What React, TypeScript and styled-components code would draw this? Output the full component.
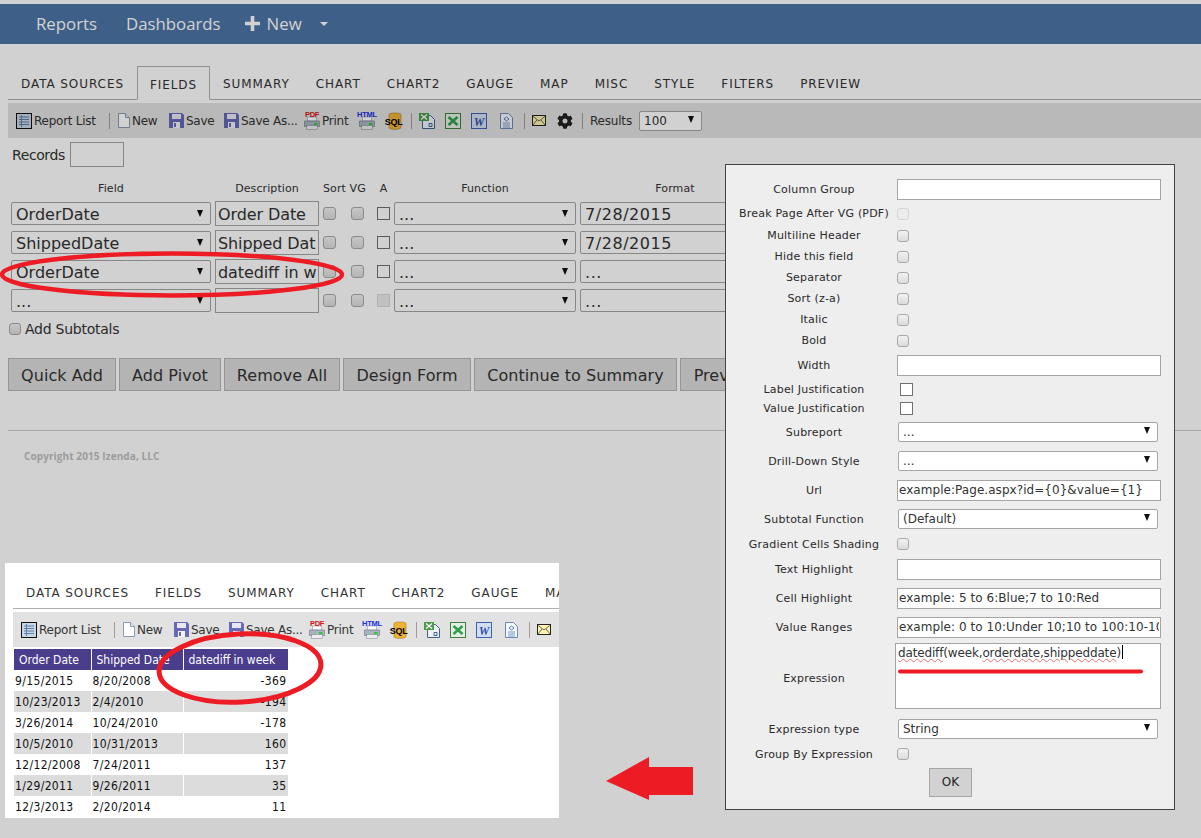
import React from 'react';
import styled, { createGlobalStyle } from 'styled-components';
import { FaCog } from 'react-icons/fa';

const GlobalStyle = createGlobalStyle`
  html, body {
    margin: 0;
    padding: 0;
    background: #ffffff;
  }
  * {
    box-sizing: border-box;
  }
`;

const Page = styled.div`
  position: relative;
  width: 1201px;
  height: 838px;
  overflow: hidden;
  background: #ffffff;
  color: #333333;
  font-family: "DejaVu Sans", Verdana, sans-serif;
  padding-top: 4px;
`;

const Nav = styled.div`
  height: 40px;
  display: flex;
  align-items: center;
  padding: 0 0 2px 36px;
  background: #4b75a6;
  color: #ffffff;
  font-family: "Open Sans", sans-serif;
  font-size: 16.8px;
`;

const NavItem = styled.span<{ $gap: number }>`
  margin-right: ${(p) => p.$gap}px;
  display: flex;
  align-items: center;
  gap: 6px;
`;

const Caret = styled.span`
  width: 0;
  height: 0;
  margin-top: 2px;
  border-left: 4px solid transparent;
  border-right: 4px solid transparent;
  border-top: 4px solid #ffffff;
`;

const Tabs = styled.div<{ $inset?: boolean }>`
  display: flex;
  align-items: flex-end;
  height: ${(p) => (p.$inset ? 29 : 34)}px;
  margin: ${(p) => (p.$inset ? '0 0 0 8px' : '22px 0 0 8px')};
  border-bottom: 1px solid #b0b0b0;
`;

const Tab = styled.div<{ $active?: boolean }>`
  flex: none;
  height: ${(p) => (p.$active ? 34 : 33)}px;
  padding: ${(p) => (p.$active ? '11px 12px 0' : '10px 12px 0')};
  margin-bottom: ${(p) => (p.$active ? -1 : 0)}px;
  font-size: 12px;
  letter-spacing: 0.92px;
  color: #333333;
  white-space: nowrap;
  background: #ffffff;
  border: 1px solid ${(p) => (p.$active ? '#b0b0b0' : 'transparent')};
  border-bottom-color: ${(p) => (p.$active ? '#ffffff' : 'transparent')};
`;

const Toolbar = styled.div`
  display: flex;
  align-items: center;
  height: 35px;
  margin: 3px 0 0 8px;
  padding-left: 8px;
  background: #e2e2e2;
  font-size: 12px;
  color: #333333;
  white-space: nowrap;
  overflow: hidden;
`;

const ToolItem = styled.span<{ $w: number }>`
  flex: none;
  display: flex;
  align-items: center;
  gap: 2px;
  width: ${(p) => p.$w}px;
  letter-spacing: -0.25px;
`;

const ToolSep = styled.span<{ $w: number }>`
  flex: none;
  width: ${(p) => p.$w}px;
  height: 16px;
  display: flex;
  justify-content: center;
  &::before {
    content: '';
    width: 1px;
    height: 16px;
    background: #a89a90;
  }
`;

const ResultsLabel = styled.span`
  flex: none;
  width: 49px;
  margin-left: 7px;
  letter-spacing: -0.2px;
`;

const Box = styled.div<{ $w: number; $h: number; $size: number; $track?: number }>`
  flex: none;
  display: flex;
  align-items: center;
  justify-content: space-between;
  width: ${(p) => p.$w}px;
  height: ${(p) => p.$h}px;
  padding: ${(p) => (p.$size > 14 ? '2px 7px 0 4px' : '0 7px 0 4px')};
  background: #ffffff;
  border: 1px solid #a5a5a5;
  border-radius: 2px;
  font-size: ${(p) => p.$size}px;
  letter-spacing: ${(p) => p.$track ?? 0}px;
  color: #333333;
  white-space: nowrap;
  overflow: hidden;
`;

const DownArrow = styled.span`
  flex: none;
  width: 0;
  height: 0;
  margin-bottom: 3px;
  border-left: 3.5px solid transparent;
  border-right: 3.5px solid transparent;
  border-top: 7px solid #111111;
`;

const RecordsRow = styled.div`
  display: flex;
  align-items: center;
  gap: 5px;
  height: 25px;
  margin: 4px 0 0 12px;
  font-size: 14px;
  letter-spacing: -0.4px;
`;

const RecordsBox = styled.div`
  width: 54px;
  height: 25px;
  background: #ffffff;
  border: 1px solid #a5a5a5;
`;

const FieldGrid = styled.div`
  display: grid;
  grid-template-columns: 204px 108px 28px 26px 17px 186px 160px;
  align-items: center;
  padding-left: 11px;
  height: 29px;
`;

const HeaderGrid = styled(FieldGrid)`
  height: 14px;
  margin: 14px 0 4px;
  font-size: 11px;
  letter-spacing: 0.1px;
`;

const HeadCell = styled.span<{ $left?: boolean; $span?: number; $w: number }>`
  grid-column: span ${(p) => p.$span ?? 1};
  width: ${(p) => p.$w}px;
  text-align: ${(p) => (p.$left ? 'left' : 'center')};
  white-space: nowrap;
`;

const DescInput = styled.input`
  display: block;
  width: 104px;
  height: 25px;
  margin: 0;
  padding: 2px 2px 0 2px;
  font-family: inherit;
  font-size: 16px;
  letter-spacing: -0.1px;
  color: #333333;
  background: #ffffff;
  border: 1px solid #a5a5a5;
  border-radius: 0;
  outline: none;
`;

const Check = styled.span<{ $faded?: boolean; $size?: number }>`
  display: block;
  flex: none;
  width: ${(p) => p.$size ?? 13}px;
  height: ${(p) => p.$size ?? 13}px;
  border: 1px solid ${(p) => (p.$faded ? '#d4d4d4' : '#a9a9a9')};
  border-radius: 3px;
  background: ${(p) => (p.$faded ? '#ececec' : 'linear-gradient(#f2f2f2, #dcdcdc)')};
`;

const Square = styled.span<{ $faded?: boolean }>`
  display: block;
  flex: none;
  width: 13px;
  height: 13px;
  border: 1px solid ${(p) => (p.$faded ? '#d8d8d8' : '#707070')};
  background: ${(p) => (p.$faded ? '#ececec' : '#ffffff')};
`;

const SubtotalRow = styled.div`
  display: flex;
  align-items: center;
  gap: 4px;
  height: 16px;
  margin: 5px 0 0 9px;
  padding-top: 1px;
  font-size: 14px;
  letter-spacing: -0.25px;
`;

const ButtonRow = styled.div`
  display: flex;
  gap: 3px;
  margin: 22px 0 0 8px;
`;

const ActionButton = styled.div<{ $w: number }>`
  flex: none;
  width: ${(p) => p.$w}px;
  height: 33px;
  line-height: 33px;
  text-align: center;
  font-size: 16px;
  letter-spacing: 0.05px;
  color: #333333;
  background: #dcdcdc;
  border: 1px solid #b6b6b6;
  white-space: nowrap;
`;

const Rule = styled.div`
  height: 1px;
  margin: 39px 0 0 8px;
  background: #cfcfcf;
`;

const Copyright = styled.div`
  margin: 19px 0 0 24px;
  font-family: "Open Sans", sans-serif;
  font-size: 10px;
  font-weight: 700;
  letter-spacing: 0.1px;
  line-height: 12px;
  color: #c0c0c0;
`;

const Dim = styled.div`
  position: absolute;
  inset: 0;
  background: rgba(0, 0, 0, 0.18);
`;

const Inset = styled.div`
  position: absolute;
  left: 5px;
  top: 563px;
  width: 554px;
  height: 255px;
  overflow: hidden;
  background: #ffffff;
  color: #111111;
  padding-top: 17px;
`;

const InsetTable = styled.table`
  margin: 2px 0 0 9px;
  width: 274px;
  table-layout: fixed;
  border-collapse: collapse;
  font-family: "DejaVu Sans Condensed", "DejaVu Sans", sans-serif;
  font-size: 12px;
`;

const Th = styled.th<{ $w: number }>`
  width: ${(p) => p.$w}px;
  height: 21px;
  padding: 0 0 0 5px;
  text-align: left;
  font-weight: 400;
  color: #ffffff;
  background: #4a3d8c;
  border-right: 1px solid #ffffff;
`;

const Tr = styled.tr<{ $even: boolean }>`
  background: ${(p) => (p.$even ? '#dcdcdc' : '#ffffff')};
`;

const Td = styled.td<{ $right?: boolean }>`
  height: 21px;
  padding: 0 1px;
  text-align: ${(p) => (p.$right ? 'right' : 'left')};
  letter-spacing: 0.35px;
  border-right: 1px solid #ffffff;
  white-space: nowrap;
`;

const Modal = styled.div`
  position: absolute;
  left: 725px;
  top: 164px;
  width: 450px;
  height: 646px;
  padding: 0 0 0 9px;
  background: #eeeeee;
  border: 1px solid #444444;
  font-size: 11px;
  color: #2a2a2a;
`;

const ModalRow = styled.div<{ $h: number; $gap: number }>`
  display: flex;
  align-items: center;
  height: ${(p) => p.$h}px;
  margin-top: ${(p) => p.$gap}px;
`;

const ModalLabel = styled.span`
  flex: none;
  width: 158px;
  margin-right: 4px;
  text-align: center;
  letter-spacing: 0.2px;
  white-space: nowrap;
`;

const ExpressionLabel = styled(ModalLabel)`
  margin-top: 4px;
`;

const ModalInput = styled.input`
  display: block;
  width: 264px;
  height: 21px;
  margin: 0;
  padding: 0 1px;
  font-family: inherit;
  font-size: 12px;
  letter-spacing: 0.05px;
  color: #333333;
  background: #ffffff;
  border: 1px solid #a5a5a5;
  border-radius: 0;
  outline: none;
`;

const Offset = styled.div<{ $x: number }>`
  margin-left: ${(p) => p.$x}px;
`;

const ExpressionBox = styled.div`
  width: 266px;
  height: 66px;
  margin-left: -2px;
  padding: 1px 0 0 2px;
  font-size: 12px;
  letter-spacing: -0.15px;
  color: #333333;
  background: #ffffff;
  border: 1px solid #a5a5a5;
  white-space: nowrap;
`;

const Squiggle = styled.span`
  text-decoration: underline wavy #e87070 1px;
  text-underline-offset: 1px;
`;

const TextCaret = styled.span`
  display: inline-block;
  width: 1px;
  height: 14px;
  margin-left: 1px;
  vertical-align: -2px;
  background: #000000;
`;

const OkRow = styled.div`
  display: flex;
  margin: 4px 0 0 194px;
`;

const OkButton = styled.div`
  width: 43px;
  height: 29px;
  line-height: 27px;
  text-align: center;
  font-size: 12px;
  color: #222222;
  background: #d2d2d2;
  border: 1px solid #a5a5a5;
`;

const Annotations = styled.svg`
  position: absolute;
  left: 0;
  top: 0;
  pointer-events: none;
`;

const Icon = styled.svg`
  flex: none;
  display: block;
  overflow: visible;
`;

const GearWrap = styled.span`
  flex: none;
  display: flex;
  width: 25px;
  font-size: 16px;
  color: #222222;
`;

const listIcon = (
  <Icon width="16" height="16" viewBox="0 0 16 16">
    <rect x="0.5" y="0.5" width="15" height="15" fill="#c9d6e6" stroke="#111" />
    <path d="M3 4h10M3 6.500h10M3 9h10M3 11.500h10M5.500 2v12" stroke="#5f7fa8" fill="none" />
  </Icon>
);

const docIcon = (
  <Icon width="12" height="15" viewBox="0 0 12 15">
    <path d="M.5.500h7l4 4v10H.5z" fill="#fff" stroke="#8a9ab0" />
    <path d="M7.500.500v4h4" fill="#dfe6ef" stroke="#8a9ab0" />
  </Icon>
);

const floppyIcon = (
  <Icon width="15" height="15" viewBox="0 0 15 15">
    <path d="M0 0h13l2 2v13H0z" fill="#6668b8" />
    <rect x="3" y="1" width="9" height="5" fill="#e8e8f6" />
    <rect x="4" y="9" width="7" height="6" fill="#f2f2f2" />
    <rect x="5" y="10" width="2" height="4" fill="#6668b8" />
  </Icon>
);

const printerIcon = (label: string, color: string) => (
  <Icon width="16" height="16" viewBox="0 0 16 16">
    <rect x="3.500" y="4" width="9" height="4" fill="#fff" stroke="#9aa5b0" strokeWidth="0.700" />
    <path d="M.5 8h15v5.500H.5z" fill="#a9b4bf" stroke="#75808c" strokeWidth="0.700" />
    <rect x="2.500" y="12.500" width="11" height="4" fill="#ececec" stroke="#75808c" strokeWidth="0.500" />
    <rect x="10" y="10" width="3.500" height="2.200" fill="#35c43a" />
    <text x="8" y="3.500" textAnchor="middle" fontSize="7.500" fontWeight="700" fontFamily="Liberation Sans, sans-serif" fill={color}>
      {label}
    </text>
  </Icon>
);

const sqlIcon = (
  <Icon width="16" height="16" viewBox="0 0 16 16">
    <path d="M3 1.500C3 -.5 15 -.5 15 1.500V14.500c0 2.500-12 2.500-12 0z" fill="#eeb23a" stroke="#a87814" strokeWidth="0.600" />
    <text x="7.500" y="12" textAnchor="middle" fontSize="9" fontWeight="700" fontFamily="Liberation Sans, sans-serif" fill="#000">
      SQL
    </text>
  </Icon>
);

const xlsDocIcon = (
  <Icon width="16" height="16" viewBox="0 0 16 16">
    <path d="M3.500 2.500h8l4 4v9h-12z" fill="#eef3fa" stroke="#40608c" />
    <rect x="0" y="0" width="10" height="8" fill="#4a9a4a" />
    <path d="M2 1.500l6 5M8 1.500l-6 5" stroke="#fff" strokeWidth="1.200" />
    <path d="M10 10.500h3v3h-3z" fill="none" stroke="#40608c" />
  </Icon>
);

const excelIcon = (
  <Icon width="16" height="16" viewBox="0 0 16 16">
    <rect x="0.500" y="0.500" width="15" height="15" fill="#e4efe2" stroke="#3f7f3f" />
    <path d="M3.500 4l9 8M12.500 4l-9 8" stroke="#2f9f4f" strokeWidth="2.600" />
  </Icon>
);

const wordIcon = (
  <Icon width="16" height="16" viewBox="0 0 16 16">
    <rect x="0.500" y="0.500" width="15" height="15" fill="#d4def2" stroke="#3c62ad" />
    <text x="8" y="12.500" textAnchor="middle" fontSize="12" fontWeight="700" fontStyle="italic" fontFamily="Liberation Serif, serif" fill="#2f55a8">
      W
    </text>
  </Icon>
);

const pageIcon = (
  <Icon width="13" height="16" viewBox="0 0 13 16">
    <path d="M.5.500h8l4 4v11H.5z" fill="#f4f7fc" stroke="#6d88b4" />
    <path d="M3 10h7M3 12h7M3 14h7" stroke="#7b9ac8" fill="none" />
    <path d="M6.500 4l2.500 2-2.500 2-2.500-2z" fill="none" stroke="#4e7cc4" />
  </Icon>
);

const mailIcon = (
  <Icon width="14" height="11" viewBox="0 0 14 11">
    <rect x="0.500" y="0.500" width="13" height="10" fill="#fdf5b0" stroke="#222" />
    <path d="M.5 1l6.500 5 6.500-5M.5 10.500l4.500-5.500M13.500 10.500L9 5" fill="none" stroke="#444" strokeWidth="0.800" />
  </Icon>
);

interface ToolbarProps {
  inset?: boolean;
}

const ReportToolbar: React.FC<ToolbarProps> = ({ inset }) => (
  <Toolbar>
    <ToolItem $w={84}>{listIcon}Report List</ToolItem>
    <ToolSep $w={18} />
    <ToolItem $w={51}>{docIcon}New</ToolItem>
    <ToolItem $w={55}>{floppyIcon}Save</ToolItem>
    <ToolItem $w={80}>{floppyIcon}Save As...</ToolItem>
    <ToolItem $w={55}>{printerIcon('PDF', '#d01818')}Print</ToolItem>
    <ToolItem $w={27}>{printerIcon('HTML', '#2030e0')}</ToolItem>
    <ToolItem $w={18}>{sqlIcon}</ToolItem>
    <ToolSep $w={15} />
    <ToolItem $w={26}>{xlsDocIcon}</ToolItem>
    <ToolItem $w={26}>{excelIcon}</ToolItem>
    <ToolItem $w={29}>{wordIcon}</ToolItem>
    <ToolItem $w={17}>{pageIcon}</ToolItem>
    <ToolSep $w={15} />
    <ToolItem $w={25}>{mailIcon}</ToolItem>
    {!inset && (
      <>
        <GearWrap>
          <FaCog />
        </GearWrap>
        <ToolSep $w={1} />
        <ResultsLabel>Results</ResultsLabel>
        <Box $w={63} $h={20} $size={12}>
          100
          <DownArrow />
        </Box>
      </>
    )}
  </Toolbar>
);

const tabNames = ['DATA SOURCES', 'FIELDS', 'SUMMARY', 'CHART', 'CHART2', 'GAUGE', 'MAP', 'MISC', 'STYLE', 'FILTERS', 'PREVIEW'];

const fieldRows = [
  { field: 'OrderDate', desc: 'Order Date', fn: '...', format: '7/28/2015' },
  { field: 'ShippedDate', desc: 'Shipped Date', fn: '...', format: '7/28/2015' },
  { field: 'OrderDate', desc: 'datediff in week', fn: '...', format: '...' },
  { field: '...', desc: '', fn: '...', format: '...', empty: true },
];

const buttons: [string, number][] = [
  ['Quick Add', 108],
  ['Add Pivot', 102],
  ['Remove All', 116],
  ['Design Form', 128],
  ['Continue to Summary', 203],
  ['Preview', 90],
];

const tableRows: [string, string, string][] = [
  ['9/15/2015', '8/20/2008', '-369'],
  ['10/23/2013', '2/4/2010', '-194'],
  ['3/26/2014', '10/24/2010', '-178'],
  ['10/5/2010', '10/31/2013', '160'],
  ['12/12/2008', '7/24/2011', '137'],
  ['1/29/2011', '9/26/2011', '35'],
  ['12/3/2013', '2/20/2014', '11'],
];

type ModalControl =
  | { kind: 'input'; value?: string }
  | { kind: 'check'; faded?: boolean }
  | { kind: 'square' }
  | { kind: 'select'; value: string };

const modalTop: { label: string; h: number; gap: number; control: ModalControl }[] = [
  { label: 'Column Group', h: 22, gap: 13, control: { kind: 'input' } },
  { label: 'Break Page After VG (PDF)', h: 21, gap: 3, control: { kind: 'check', faded: true } },
  { label: 'Multiline Header', h: 21, gap: 1, control: { kind: 'check' } },
  { label: 'Hide this field', h: 21, gap: 0, control: { kind: 'check' } },
  { label: 'Separator', h: 21, gap: 0, control: { kind: 'check' } },
  { label: 'Sort (z-a)', h: 21, gap: 0, control: { kind: 'check' } },
  { label: 'Italic', h: 21, gap: 0, control: { kind: 'check' } },
  { label: 'Bold', h: 21, gap: 0, control: { kind: 'check' } },
  { label: 'Width', h: 22, gap: 3, control: { kind: 'input' } },
  { label: 'Label Justification', h: 19, gap: 4, control: { kind: 'square' } },
  { label: 'Value Justification', h: 19, gap: 0, control: { kind: 'square' } },
  { label: 'Subreport', h: 20, gap: 4, control: { kind: 'select', value: '...' } },
  { label: 'Drill-Down Style', h: 20, gap: 9, control: { kind: 'select', value: '...' } },
  { label: 'Url', h: 22, gap: 8, control: { kind: 'input', value: 'example:Page.aspx?id={0}&value={1}' } },
  { label: 'Subtotal Function', h: 20, gap: 8, control: { kind: 'select', value: '(Default)' } },
  { label: 'Gradient Cells Shading', h: 20, gap: 5, control: { kind: 'check' } },
  { label: 'Text Highlight', h: 22, gap: 4, control: { kind: 'input' } },
  { label: 'Cell Highlight', h: 22, gap: 7, control: { kind: 'input', value: 'example: 5 to 6:Blue;7 to 10:Red' } },
  { label: 'Value Ranges', h: 22, gap: 7, control: { kind: 'input', value: 'example: 0 to 10:Under 10;10 to 100:10-100' } },
];

const renderControl = (control: ModalControl) => {
  if (control.kind === 'input') return <ModalInput readOnly value={control.value ?? ''} />;
  if (control.kind === 'check') return <Check $size={12} $faded={control.faded} />;
  if (control.kind === 'square') {
    return (
      <Offset $x={3}>
        <Square />
      </Offset>
    );
  }
  return (
    <Offset $x={1}>
      <Box $w={260} $h={20} $size={12}>
        {control.value}
        <DownArrow />
      </Box>
    </Offset>
  );
};

const App: React.FC = () => (
  <Page>
    <GlobalStyle />
    <Nav>
      <NavItem $gap={29}>Reports</NavItem>
      <NavItem $gap={23}>Dashboards</NavItem>
      <NavItem $gap={18}>
        <Icon width="17" height="17" viewBox="0 0 17 17">
          <path d="M8.500 1v15M1 8.500h15" stroke="#fff" strokeWidth="3.600" fill="none" />
        </Icon>
        New
      </NavItem>
      <Caret />
    </Nav>

    <Tabs>
      {tabNames.map((name) => (
        <Tab key={name} $active={name === 'FIELDS'}>
          {name}
        </Tab>
      ))}
    </Tabs>

    <ReportToolbar />

    <RecordsRow>
      Records
      <RecordsBox />
    </RecordsRow>

    <HeaderGrid>
      <HeadCell $w={200}>Field</HeadCell>
      <HeadCell $w={104}>Description</HeadCell>
      <HeadCell $w={54} $span={2} $left>
        Sort VG
      </HeadCell>
      <HeadCell $w={13}>A</HeadCell>
      <HeadCell $w={182}>Function</HeadCell>
      <HeadCell $w={190}>Format</HeadCell>
    </HeaderGrid>

    {fieldRows.map((row, i) => (
      <FieldGrid key={i}>
        <Box $w={200} $h={23} $size={16}>
          {row.field}
          <DownArrow />
        </Box>
        <DescInput readOnly value={row.desc} />
        <Check />
        <Check />
        <Square $faded={row.empty} />
        <Box $w={182} $h={23} $size={16}>
          {row.fn}
          <DownArrow />
        </Box>
        <Box $w={160} $h={23} $size={16} $track={0.55}>
          {row.format}
        </Box>
      </FieldGrid>
    ))}

    <SubtotalRow>
      <Check $size={12} />
      Add Subtotals
    </SubtotalRow>

    <ButtonRow>
      {buttons.map(([label, w]) => (
        <ActionButton key={label} $w={w}>
          {label}
        </ActionButton>
      ))}
    </ButtonRow>

    <Rule />
    <Copyright>Copyright 2015 Izenda, LLC</Copyright>

    <Dim />

    <Inset>
      <Tabs $inset>
        {tabNames.map((name) => (
          <Tab key={name}>{name}</Tab>
        ))}
      </Tabs>
      <ReportToolbar inset />
      <InsetTable>
        <thead>
          <tr>
            <Th $w={77}>Order Date</Th>
            <Th $w={92}>Shipped Date</Th>
            <Th $w={105}>datediff in week</Th>
          </tr>
        </thead>
        <tbody>
          {tableRows.map((row, i) => (
            <Tr key={row[0]} $even={i % 2 === 1}>
              <Td>{row[0]}</Td>
              <Td>{row[1]}</Td>
              <Td $right>{row[2]}</Td>
            </Tr>
          ))}
        </tbody>
      </InsetTable>
    </Inset>

    <Modal>
      {modalTop.map((row) => (
        <ModalRow key={row.label} $h={row.h} $gap={row.gap}>
          <ModalLabel>{row.label}</ModalLabel>
          {renderControl(row.control)}
        </ModalRow>
      ))}
      <ModalRow $h={66} $gap={5}>
        <ExpressionLabel>Expression</ExpressionLabel>
        <ExpressionBox>
          <Squiggle>datediff</Squiggle>(week,<Squiggle>orderdate,shippeddate</Squiggle>)
          <TextCaret />
        </ExpressionBox>
      </ModalRow>
      <ModalRow $h={20} $gap={10}>
        <ModalLabel>Expression type</ModalLabel>
        {renderControl({ kind: 'select', value: 'String' })}
      </ModalRow>
      <ModalRow $h={20} $gap={5}>
        <ModalLabel>Group By Expression</ModalLabel>
        <Check $size={12} />
      </ModalRow>
      <OkRow>
        <OkButton>OK</OkButton>
      </OkRow>
    </Modal>

    <Annotations width="1201" height="838" viewBox="0 0 1201 838">
      <ellipse cx="172" cy="274.500" rx="170" ry="21" fill="none" stroke="#ed1c24" strokeWidth="4.500" />
      <ellipse cx="240" cy="668" rx="81" ry="34" fill="none" stroke="#ed1c24" strokeWidth="5" transform="rotate(-3 240 668)" />
      <path d="M900 671.500H1141" stroke="#ed1c24" strokeWidth="4" strokeLinecap="round" />
      <path d="M606 781L649 757V767H693V795H649V800Z" fill="#ed1c24" />
    </Annotations>
  </Page>
);

export default App;
